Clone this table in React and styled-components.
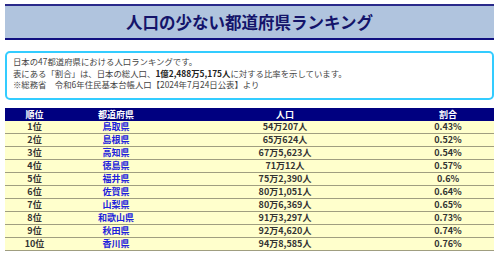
import React from 'react'
import styled, { createGlobalStyle } from 'styled-components'

const GlobalStyle = createGlobalStyle`
  body {
    margin: 0;
    background: #fff;
    font-family: "Noto Sans CJK JP", "Noto Sans", sans-serif;
  }
`

const rows = [
  ['1位', '鳥取県', '54万207人', '0.43%'],
  ['2位', '島根県', '65万624人', '0.52%'],
  ['3位', '高知県', '67万5,623人', '0.54%'],
  ['4位', '徳島県', '71万12人', '0.57%'],
  ['5位', '福井県', '75万2,390人', '0.6%'],
  ['6位', '佐賀県', '80万1,051人', '0.64%'],
  ['7位', '山梨県', '80万6,369人', '0.65%'],
  ['8位', '和歌山県', '91万3,297人', '0.73%'],
  ['9位', '秋田県', '92万4,620人', '0.74%'],
  ['10位', '香川県', '94万8,585人', '0.76%'],
]

const App = () => {
  return (
    <Page>
      <GlobalStyle />
      <Title>人口の少ない都道府県ランキング</Title>
      <InfoBox>
        <p>日本の47都道府県における人口ランキングです。</p>
        <p>表にある「割合」は、日本の総人口、<b>1億2,488万5,175人</b>に対する比率を示しています。</p>
        <p>※総務省　令和6年住民基本台帳人口【2024年7月24日公表】より</p>
      </InfoBox>
      <Ranking>
        <HeadRow>
          <Cell>順位</Cell>
          <Cell>都道府県</Cell>
          <Cell>人口</Cell>
          <Cell>割合</Cell>
        </HeadRow>
        {rows.map((r) => (
          <Row key={r[0]}>
            <Cell>{r[0]}</Cell>
            <Cell $link>{r[1]}</Cell>
            <Cell>{r[2]}</Cell>
            <Cell>{r[3]}</Cell>
          </Row>
        ))}
      </Ranking>
    </Page>
  )
}

const Page = styled.div`
  padding: 4px 6px 0 5px;
`

const Title = styled.h1`
  margin: 0;
  height: 32px;
  border-top: 2px solid #2a2a8a;
  border-bottom: 2px solid #101080;
  background: #b0c4de;
  color: #14146a;
  font-size: 16.5px;
  font-weight: bold;
  text-align: center;
  line-height: 33px;
`

const InfoBox = styled.div`
  margin-top: 11px;
  border: 2px solid #33ccff;
  border-radius: 5px;
  padding: 3px 6px 7px;
  color: #444;
  font-size: 8.4px;
  line-height: 11.6px;
  p {
    margin: 0;
  }
  b {
    color: #222;
  }
`

const Ranking = styled.div`
  margin-top: 8px;
  font-size: 9px;
  font-weight: bold;
`

const HeadRow = styled.div`
  display: grid;
  grid-template-columns: 59px 104px 234px 1fr;
  height: 13px;
  line-height: 13px;
  background: #000080;
  color: #fff;
`

const Row = styled.div`
  display: grid;
  grid-template-columns: 59px 104px 234px 1fr;
  height: 12px;
  line-height: 12px;
  background: #ffffcc;
  color: #333;
  border-bottom: 1.33px solid #a09e80;
`

const Cell = styled.div`
  display: flex;
  justify-content: center;
  white-space: nowrap;
  color: ${(p) => (p.$link ? '#2020dd' : 'inherit')};
`

export default App
